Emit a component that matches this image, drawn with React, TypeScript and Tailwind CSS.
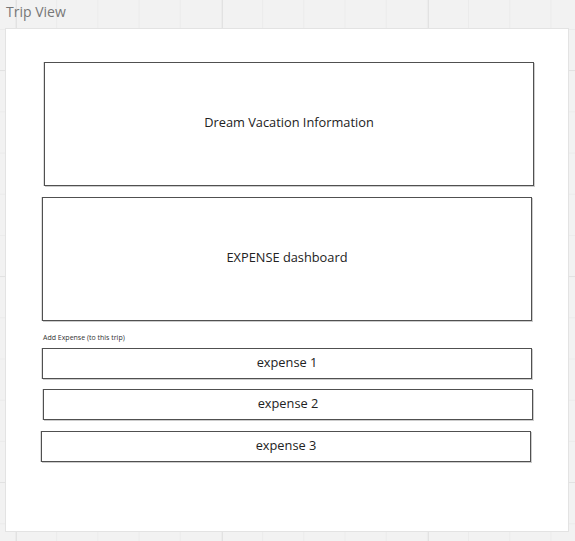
export default function App() {
  return (
    <div
      className="relative w-[575px] h-[541px] overflow-hidden bg-[#f2f2f2] font-['Open_Sans',sans-serif]
        bg-[linear-gradient(to_right,#e2e2e2_1px,transparent_1px),linear-gradient(to_bottom,#e2e2e2_1px,transparent_1px),linear-gradient(to_right,#ebebeb_1px,transparent_1px),linear-gradient(to_bottom,#ebebeb_1px,transparent_1px)]
        bg-[size:206px_206px,206px_206px,41.2px_41.2px,41.2px_41.2px]
        bg-[position:16px_0px,0px_70px,15px_0px,0px_29px]"
    >
      {/* Title */}
      <div className="h-[28px] pl-[6px] pt-[3px] text-[14px] leading-[18px] text-[#777]">Trip View</div>

      {/* Panel */}
      <div className="ml-[5px] w-[564px] h-[504px] border border-[#e3e3e3] bg-white">
        <div className="pt-[33px] flex flex-col items-start text-[12.8px] text-[#222]">
          {/* Dream vacation */}
          <div className="ml-[38px] w-[490px] h-[124px] flex items-center justify-center pb-[2px] border border-[#505050] shadow-[1px_1px_0_#ccc,-1px_0_0_#ddd]">
            Dream Vacation Information
          </div>

          {/* Expense dashboard */}
          <div className="ml-[36px] mt-[11px] w-[490px] h-[124px] flex items-center justify-center pb-[2px] border border-[#505050] shadow-[1px_1px_0_#ccc,-1px_0_0_#ddd]">
            EXPENSE dashboard
          </div>

          <div className="ml-[37px] mt-[12px] text-[7px] leading-[10px] text-[#333]">Add Expense (to this trip)</div>

          <div className="ml-[36px] mt-[5px] w-[490px] h-[31px] flex items-center justify-center pb-[1px] border border-[#505050] shadow-[1px_1px_0_#ccc,-1px_0_0_#ddd]">
            expense 1
          </div>
          <div className="ml-[37px] mt-[10px] w-[490px] h-[31px] flex items-center justify-center pb-[1px] border border-[#505050] shadow-[1px_1px_0_#ccc,-1px_0_0_#ddd]">
            expense 2
          </div>
          <div className="ml-[35px] mt-[11px] w-[490px] h-[31px] flex items-center justify-center pb-[1px] border border-[#505050] shadow-[1px_1px_0_#ccc,-1px_0_0_#ddd]">
            expense 3
          </div>
        </div>
      </div>
    </div>
  )
}
